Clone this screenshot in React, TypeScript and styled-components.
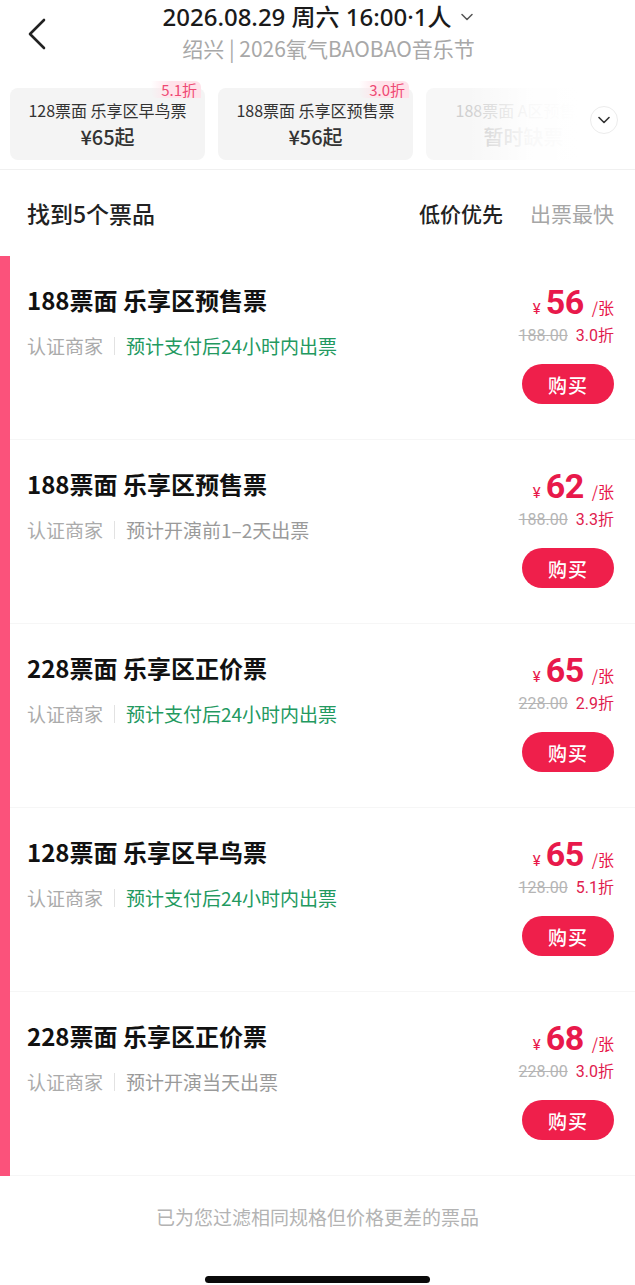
import React from "react";
import styled, { createGlobalStyle } from "styled-components";

const Global = createGlobalStyle`
  html, body { margin: 0; padding: 0; background: #fff; }
  body { font-family: "Noto Sans CJK SC", "Noto Sans", sans-serif; color: #222; width: 635px; overflow-x: hidden; }
  * { box-sizing: border-box; }
`;

const Page = styled.div`
  width: 635px;
  background: #fff;
`;

const Header = styled.header`
  display: grid;
  grid-template-columns: 72px 1fr 72px;
  height: 61px;
`;

const BackBtn = styled.div`
  display: flex;
  align-items: flex-start;
  padding: 18px 0 0 26px;
`;

const HeadText = styled.div`
  display: flex;
  flex-direction: column;
  align-items: center;
  padding-top: 2px;
`;

const Title = styled.div`
  display: flex;
  align-items: center;
  gap: 9px;
  font-family: "Noto Sans", "Noto Sans CJK SC", sans-serif;
  font-size: 24px;
  line-height: 30px;
  font-weight: 500;
  color: #1a1a1a;
  white-space: nowrap;
`;

const Sub = styled.div`
  margin-top: 3px;
  padding-left: 22px;
  font-size: 21px;
  line-height: 26px;
  color: #a8a8a8;
  white-space: nowrap;
`;

const ChipBar = styled.div`
  display: flex;
  align-items: flex-start;
  padding: 19px 0 9px;
  border-bottom: 1px solid #f0f0f0;
`;

const Scroller = styled.div`
  position: relative;
  flex: 1;
  display: flex;
  gap: 13px;
  padding: 8px 0 0 10px;
  overflow: hidden;
  &::after {
    content: "";
    position: absolute;
    top: 0;
    right: 0;
    bottom: 0;
    width: 110px;
    background: linear-gradient(to right, rgba(255,255,255,0), rgba(255,255,255,0.85) 55%, #fff);
  }
`;

const Chip = styled.div<{ $dim?: boolean }>`
  position: relative;
  flex: 0 0 195px;
  height: 72px;
  border-radius: 8px;
  background: ${p => (p.$dim ? "#f7f7f7" : "#f4f4f4")};
  display: flex;
  flex-direction: column;
  align-items: center;
  padding-top: 11px;
  color: ${p => (p.$dim ? "#cfcfcf" : "#333")};
  white-space: nowrap;
`;

const ChipName = styled.div`
  font-size: 16px;
  line-height: 22px;
`;

const ChipPrice = styled.div`
  margin-top: 3px;
  font-size: 20px;
  line-height: 26px;
  font-weight: 500;
`;

const Badge = styled.span`
  position: absolute;
  top: -7px;
  right: 4px;
  padding: 0 4px 0 10px;
  font-size: 15px;
  line-height: 17px;
  color: #ee4a74;
  background: linear-gradient(to right, rgba(255, 228, 235, 0), #ffe3ea 40%);
  border-radius: 0 6px 0 6px;
`;

const DropBtn = styled.div`
  flex: 0 0 28px;
  width: 28px;
  height: 28px;
  margin: 26px 17px 0 12px;
  border-radius: 50%;
  border: 1px solid #ececec;
  display: flex;
  align-items: center;
  justify-content: center;
`;

const SortBar = styled.div`
  display: flex;
  align-items: center;
  justify-content: space-between;
  height: 86px;
  padding: 0 21px 0 27px;
`;

const Found = styled.div`
  font-size: 23px;
  font-weight: 500;
  color: #222;
`;

const Sorts = styled.div`
  display: flex;
  gap: 27px;
`;

const SortItem = styled.span<{ $active?: boolean }>`
  font-size: 21px;
  font-weight: ${p => (p.$active ? 500 : 400)};
  color: ${p => (p.$active ? "#222" : "#a6a6a6")};
`;

const List = styled.div``;

const Card = styled.div`
  display: flex;
  height: 184px;
  border-left: 10px solid #fb527b;
`;

const CardBody = styled.div`
  flex: 1;
  display: flex;
  justify-content: space-between;
  padding: 28px 21px 0 17px;
  border-bottom: 1px solid #f6f6f6;
`;

const Left = styled.div`
  display: flex;
  flex-direction: column;
`;

const CardTitle = styled.div`
  font-size: 24px;
  line-height: 32px;
  font-weight: 700;
  color: #111;
  white-space: nowrap;
`;

const Meta = styled.div`
  margin-top: 16px;
  display: flex;
  align-items: center;
  font-size: 19px;
  line-height: 28px;
  white-space: nowrap;
`;

const Merchant = styled.span`
  color: #ababab;
`;

const Divider = styled.span`
  width: 1px;
  height: 18px;
  background: #e2e2e2;
  margin: 0 11px;
`;

const Eta = styled.span<{ $green?: boolean }>`
  color: ${p => (p.$green ? "#23995f" : "#9a9a9a")};
`;

const Right = styled.div`
  display: flex;
  flex-direction: column;
  align-items: flex-end;
`;

const PriceRow = styled.div`
  display: flex;
  align-items: baseline;
  height: 36px;
  line-height: 36px;
  color: #e8194b;
  font-family: "Roboto", "Noto Sans", sans-serif;
`;

const Yen = styled.span`
  font-size: 15px;
  margin-right: 5px;
`;

const Amount = styled.span`
  font-size: 34px;
  font-weight: 700;
  letter-spacing: -0.5px;
`;

const Unit = styled.span`
  font-size: 16px;
  margin-left: 8px;
  color: #e8194b;
  font-family: "Noto Sans CJK SC", sans-serif;
`;

const OrigRow = styled.div`
  margin-top: 5px;
  display: flex;
  gap: 8px;
  font-size: 16px;
  line-height: 22px;
  font-family: "Roboto", "Noto Sans CJK SC", sans-serif;
`;

const Strike = styled.span`
  color: #b5b5b5;
  text-decoration: line-through;
`;

const Discount = styled.span`
  color: #e0204e;
  font-family: "Roboto", "Noto Sans CJK SC", sans-serif;
`;

const BuyBtn = styled.button`
  margin-top: 17px;
  width: 92px;
  height: 40px;
  border: none;
  border-radius: 20px;
  background: #ef1f4b;
  color: #fff;
  font-size: 19px;
  font-family: "Noto Sans CJK SC", sans-serif;
  font-weight: 500;
  letter-spacing: 1px;
  padding: 0;
`;

const Footer = styled.div`
  margin-top: 27px;
  text-align: center;
  font-size: 19px;
  line-height: 28px;
  color: #b3b3b3;
`;

const HomeBar = styled.div`
  margin: 45px auto 0;
  width: 225px;
  height: 7px;
  border-radius: 4px;
  background: #0a0a0a;
`;

type Ticket = {
  title: string;
  eta: string;
  green: boolean;
  price: string;
  orig: string;
  disc: string;
};

const tickets: Ticket[] = [
  { title: "188票面 乐享区预售票", eta: "预计支付后24小时内出票", green: true, price: "56", orig: "188.00", disc: "3.0折" },
  { title: "188票面 乐享区预售票", eta: "预计开演前1–2天出票", green: false, price: "62", orig: "188.00", disc: "3.3折" },
  { title: "228票面 乐享区正价票", eta: "预计支付后24小时内出票", green: true, price: "65", orig: "228.00", disc: "2.9折" },
  { title: "128票面 乐享区早鸟票", eta: "预计支付后24小时内出票", green: true, price: "65", orig: "128.00", disc: "5.1折" },
  { title: "228票面 乐享区正价票", eta: "预计开演当天出票", green: false, price: "68", orig: "228.00", disc: "3.0折" },
];

export default function App() {
  return (
    <Page>
      <Global />
      <Header>
        <BackBtn>
          <svg width="22" height="32" viewBox="0 0 22 32" fill="none">
            <path d="M18 2 L4 16 L18 30" stroke="#222" strokeWidth="2.6" strokeLinecap="round" strokeLinejoin="round" />
          </svg>
        </BackBtn>
        <HeadText>
          <Title>
            <span>2026.08.29 周六 16:00·1人</span>
            <svg width="12" height="8" viewBox="0 0 12 8" fill="none">
              <path d="M1 1.5 L6 6.5 L11 1.5" stroke="#555" strokeWidth="1.5" strokeLinecap="round" strokeLinejoin="round" />
            </svg>
          </Title>
          <Sub>绍兴 | 2026氧气BAOBAO音乐节</Sub>
        </HeadText>
        <div />
      </Header>

      <ChipBar>
        <Scroller>
          <Chip>
            <Badge>5.1折</Badge>
            <ChipName>128票面 乐享区早鸟票</ChipName>
            <ChipPrice>¥65起</ChipPrice>
          </Chip>
          <Chip>
            <Badge>3.0折</Badge>
            <ChipName>188票面 乐享区预售票</ChipName>
            <ChipPrice>¥56起</ChipPrice>
          </Chip>
          <Chip $dim>
            <ChipName>188票面 A区预售票</ChipName>
            <ChipPrice>暂时缺票</ChipPrice>
          </Chip>
        </Scroller>
        <DropBtn>
          <svg width="12" height="8" viewBox="0 0 12 8" fill="none">
            <path d="M1 1.5 L6 6.5 L11 1.5" stroke="#333" strokeWidth="1.6" strokeLinecap="round" strokeLinejoin="round" />
          </svg>
        </DropBtn>
      </ChipBar>

      <SortBar>
        <Found>找到5个票品</Found>
        <Sorts>
          <SortItem $active>低价优先</SortItem>
          <SortItem>出票最快</SortItem>
        </Sorts>
      </SortBar>

      <List>
        {tickets.map((t, i) => (
          <Card key={i}>
            <CardBody>
              <Left>
                <CardTitle>{t.title}</CardTitle>
                <Meta>
                  <Merchant>认证商家</Merchant>
                  <Divider />
                  <Eta $green={t.green}>{t.eta}</Eta>
                </Meta>
              </Left>
              <Right>
                <PriceRow>
                  <Yen>¥</Yen>
                  <Amount>{t.price}</Amount>
                  <Unit>/张</Unit>
                </PriceRow>
                <OrigRow>
                  <Strike>{t.orig}</Strike>
                  <Discount>{t.disc}</Discount>
                </OrigRow>
                <BuyBtn>购买</BuyBtn>
              </Right>
            </CardBody>
          </Card>
        ))}
      </List>

      <Footer>已为您过滤相同规格但价格更差的票品</Footer>
      <HomeBar />
    </Page>
  );
}
